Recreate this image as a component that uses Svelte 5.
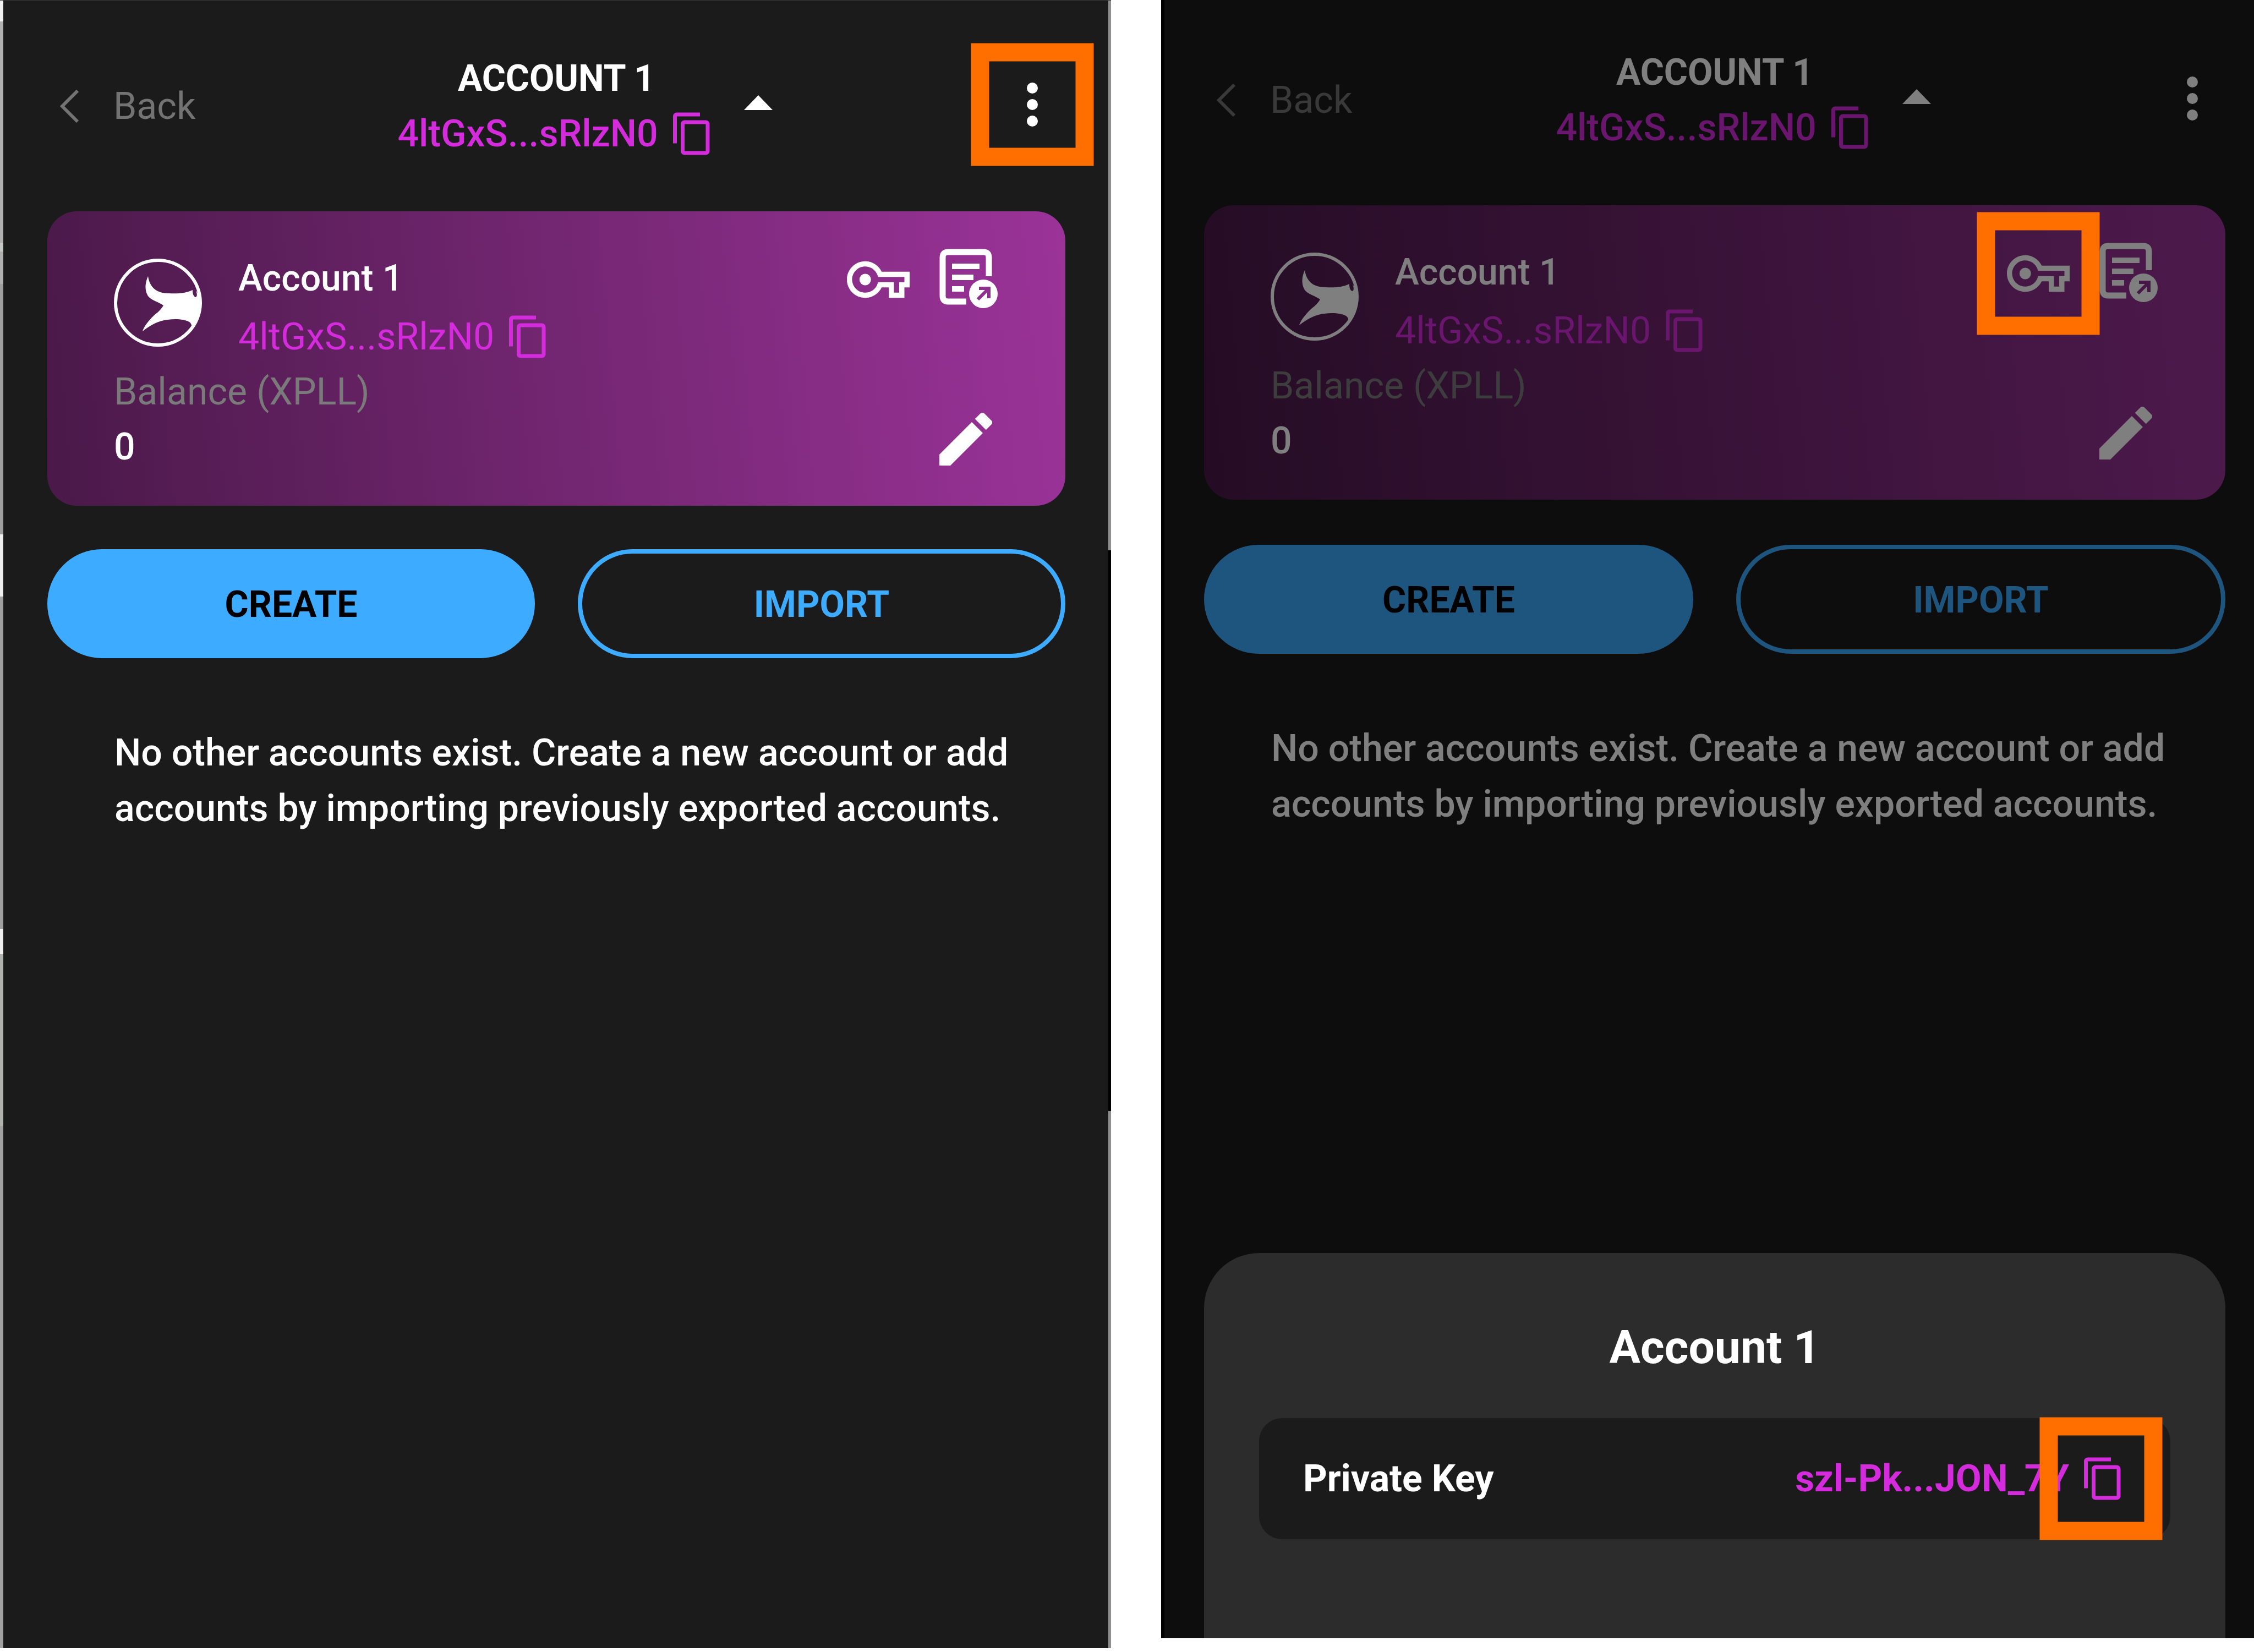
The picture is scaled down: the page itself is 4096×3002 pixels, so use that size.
<script>
  const account = { name: 'Account 1', address: '4ltGxS...sRlzN0', balance: '0' };
  const privateKey = 'szl-Pk...JON_7Y';
</script>

{#snippet copyIcon()}
  <svg class="copy-icon" viewBox="0 0 24 24" aria-hidden="true">
    <path d="M16 1H4c-1.1 0-2 .9-2 2v14h2V3h12V1zm3 4H8c-1.1 0-2 .9-2 2v14c0 1.1.9 2 2 2h11c1.1 0 2-.9 2-2V7c0-1.1-.9-2-2-2zm0 16H8V7h11v14z" />
  </svg>
{/snippet}

{#snippet address()}
  <span class="address">
    <span>{account.address}</span>
    <button class="icon-button" aria-label="Copy address">{@render copyIcon()}</button>
  </span>
{/snippet}

{#snippet wallet(markMenu, markKey)}
  <header class="top">
    <button class="back">
      <svg viewBox="0 0 40 60" aria-hidden="true"><path d="M35 2 7 30l28 28" /></svg>
      Back
    </button>
    <div class="current">
      <h1>{account.name}</h1>
      {@render address()}
    </div>
    <div class="top-actions">
      <button class="icon-button" aria-label="Switch account">
        <svg class="large-icon" viewBox="0 0 24 24" aria-hidden="true"><path d="M6.8 14 12 8.6 17.2 14z" /></svg>
      </button>
      <button class="icon-button" class:marked={markMenu} aria-label="Menu">
        <svg class="large-icon" viewBox="0 0 24 24" aria-hidden="true">
          <circle cx="12" cy="6" r="2" /><circle cx="12" cy="12" r="2" /><circle cx="12" cy="18" r="2" />
        </svg>
      </button>
    </div>
  </header>

  <section class="card">
    <div class="details">
      <div class="profile">
        <svg class="avatar" viewBox="0 0 160 160" aria-hidden="true">
          <circle cx="80" cy="80" r="77" fill="none" stroke="currentColor" stroke-width="6" />
          <path d="M62 32C57 43 55 57 62 68C68 76 82 79 90 85C84 96 75 100 68 108C60 117 55 123 52 132C66 121 82 112 98 111C112 109 128 110 137 115C143 119 142 127 139 133C152 118 158 98 157 79C156 72 154 64 149 58C152 65 151 70 148 70C144 68 143 63 143 57C131 63 115 64 100 63C84 63 66 58 62 32Z" />
        </svg>
        <div class="names">
          <h2>{account.name}</h2>
          {@render address()}
        </div>
      </div>
      <p class="label">Balance (XPLL)</p>
      <p>{account.balance}</p>
    </div>
    <div class="card-actions">
      <div class="card-icons">
        <button class="icon-button" class:marked={markKey} aria-label="Show private key">
          <svg class="key-icon" viewBox="0 0 24 24" aria-hidden="true">
            <path d="M22 19h-6v-4h-2.68c-1.14 2.42-3.6 4-6.32 4-3.86 0-7-3.14-7-7s3.14-7 7-7c2.72 0 5.17 1.58 6.32 4H24v6h-2v4zm-4-2h2v-4h2v-2H11.94l-.23-.67C11.01 8.34 9.11 7 7 7c-2.76 0-5 2.24-5 5s2.24 5 5 5c2.11 0 4.01-1.34 4.71-3.33l.23-.67H18v4z" />
            <circle cx="7" cy="12" r="2.2" />
          </svg>
        </button>
        <button class="icon-button" aria-label="Export account">
          <svg class="card-icon" viewBox="0 0 128 128" aria-hidden="true">
            <path d="M106 58V24q0-10-10-10H32q-10 0-10 10v70q0 10 10 10h33" fill="none" stroke="currentColor" stroke-width="11" />
            <path d="M39 35h50v10H39zM39 55h39v10H39zM39 76h22v10H39z" />
            <circle cx="96" cy="90" r="26" />
            <path class="cutout" d="M86 100l19-19M88 80h18v18" />
          </svg>
        </button>
      </div>
      <button class="icon-button" aria-label="Rename account">
        <svg class="card-icon" viewBox="0 0 24 24" aria-hidden="true">
          <path d="M3 17.25V21h3.75L17.81 9.94l-3.75-3.75L3 17.25zM20.71 7.04c.39-.39.39-1.02 0-1.41l-2.34-2.34a1 1 0 0 0-1.41 0l-1.83 1.83 3.75 3.75 1.83-1.83z" />
        </svg>
      </button>
    </div>
  </section>

  <div class="buttons">
    <button class="pill filled">Create</button>
    <button class="pill">Import</button>
  </div>

  <p class="empty">
    No other accounts exist. Create a new account or add accounts by importing previously exported accounts.
  </p>
{/snippet}

<main class="page">
  <section class="panel first">
    {@render wallet(true, false)}
  </section>

  <section class="panel second">
    {@render wallet(false, true)}
    <div class="scrim"></div>
    <div class="sheet" role="dialog" aria-label="Account 1">
      <h2>{account.name}</h2>
      <div class="key-row">
        <span>Private Key</span>
        <span class="address">
          <span>{privateKey}</span>
          <button class="icon-button marked" aria-label="Copy private key">{@render copyIcon()}</button>
        </span>
      </div>
    </div>
  </section>
</main>

<style>
  :global(body) {
    background: #fff;
  }

  .page {
    --purple: #d42bdc;
    --blue: #3dabff;
    --orange: #ff6f00;
    box-sizing: border-box;
    display: grid;
    grid-template-columns: 2019fr 1986fr;
    column-gap: 91px;
    min-height: 100vh;
    color: #fff;
    font: 500 68px/100px Roboto, 'Liberation Sans', sans-serif;
  }

  h1,
  h2,
  p {
    margin: 0;
    font: inherit;
  }

  button {
    margin: 0;
    padding: 0;
    border: 0;
    background: none;
    color: inherit;
    font: inherit;
    cursor: pointer;
  }

  svg {
    display: block;
    fill: currentColor;
  }

  .panel {
    position: relative;
    box-sizing: border-box;
    background: #1b1b1b;
  }

  .first {
    margin-bottom: 7px;
    padding: 92px 83px 0 86px;
    border-top: 1px solid #363838;
    background:
      linear-gradient(
        #f0f0f0 0 38px, #b0b0b0 38px 440px, #c6c8c4 440px 456px, #b0b0b0 456px 515px,
        #a0a0a0 515px 970px, #efefef 970px 1083px, #a0a0a0 1083px 1687px, #efefef 1687px 1733px,
        #b0b3ad 1733px 2045px, #a2a2a2 2045px
      ) left / 6px 100% no-repeat,
      linear-gradient(#8f8f8f 0 999px, #000 999px 2018px, #8f8f8f 2018px) right / 5px 100% no-repeat,
      #1b1b1b;
  }

  .second {
    margin-bottom: 25px;
    padding: 82px 52px 0 78px;
  }

  .second .buttons {
    margin-top: 82px;
  }

  .top {
    display: grid;
    grid-template-columns: 1fr auto 1fr;
    align-items: center;
  }

  .back {
    display: flex;
    align-items: center;
    gap: 60px;
    padding-left: 20px;
    color: #737373;
    font-weight: 400;
  }

  .back svg {
    width: 40px;
    height: 60px;
    fill: none;
    stroke: currentColor;
    stroke-width: 6px;
  }

  .current {
    text-align: center;
  }

  .current h1 {
    font-size: 66px;
    font-weight: 700;
    text-transform: uppercase;
  }

  .address {
    display: flex;
    align-items: center;
    gap: 12px;
    color: var(--purple);
  }

  .address .icon-button {
    padding-left: 8px;
  }

  .copy-icon {
    width: 84px;
    height: 84px;
  }

  .large-icon {
    width: 120px;
    height: 120px;
  }

  .top-actions {
    display: flex;
    justify-content: space-between;
    padding: 0 0 6px 18px;
  }

  .icon-button {
    position: relative;
  }

  /* Highlight frame centred on the icon it points out */
  .marked::after {
    content: '';
    position: absolute;
    z-index: 3;
    top: 50%;
    left: 50%;
    box-sizing: border-box;
    width: 223px;
    height: 223px;
    border: 33px solid var(--orange);
    transform: translate(-50%, -50%);
  }

  .card {
    display: flex;
    justify-content: space-between;
    margin-top: 91px;
    padding: 60px 117px 57px 121px;
    border-radius: 54px;
    background: linear-gradient(85deg, #4a1949, #9b3399);
  }

  .details {
    padding-top: 12px;
  }

  .profile {
    display: flex;
    gap: 66px;
  }

  .avatar {
    width: 160px;
    height: 160px;
    margin-top: 14px;
  }

  .names {
    display: grid;
    gap: 6px;
    font-weight: 400;
  }

  .names h2 {
    font-size: 66px;
    font-weight: 500;
  }

  .label {
    color: #7a7a7a;
    font-weight: 400;
  }

  .card-actions {
    display: flex;
    flex-direction: column;
    justify-content: space-between;
    align-items: flex-end;
  }

  .card-icons {
    display: flex;
    align-items: center;
    gap: 38px;
  }

  .key-icon {
    width: 114px;
    height: 114px;
  }

  .card-icon {
    width: 128px;
    height: 128px;
  }

  .cutout {
    fill: none;
    stroke: #8f2f8e;
    stroke-width: 6px;
  }

  .buttons {
    display: grid;
    grid-template-columns: 1fr 1fr;
    gap: 78px;
    margin-top: 79px;
  }

  .pill {
    box-sizing: border-box;
    height: 198px;
    padding-top: 4px;
    border: 8px solid var(--blue);
    border-radius: 99px;
    color: var(--blue);
    font-size: 66px;
    font-weight: 700;
    text-transform: uppercase;
  }

  .filled {
    background: var(--blue);
    color: #000;
  }

  .empty {
    margin-top: 122px;
    padding: 0 80px 0 122px;
    line-height: 101px;
  }

  .scrim {
    position: absolute;
    inset: 0;
    border-left: 6px solid #000;
    background: rgb(0 0 0 / 50%);
  }

  .sheet {
    position: absolute;
    z-index: 2;
    right: 52px;
    bottom: 0;
    left: 78px;
    padding: 122px 100px 180px;
    border-radius: 100px 100px 0 0;
    background: #2c2c2c;
  }

  .sheet h2 {
    font-size: 84px;
    font-weight: 700;
    text-align: center;
  }

  .key-row {
    display: flex;
    justify-content: space-between;
    align-items: center;
    margin-top: 78px;
    padding: 60px 80px;
    border-radius: 42px;
    background: #1b1b1b;
    font-weight: 700;
  }
</style>
